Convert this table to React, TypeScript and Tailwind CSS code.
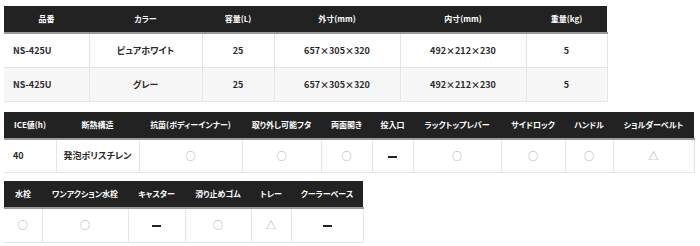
import type { ReactNode } from 'react';

type Cell = ReactNode;

const Circle = () => <span className="text-[#a6a6a6] font-normal text-[10px]">○</span>;
const Tri = () => <span className="text-[#a6a6a6] font-normal text-[10px]">△</span>;
const Dash = () => <span className="inline-block h-[2px] w-[9px] bg-[#222] align-middle" />;

function SpecTable({
  widths,
  head,
  rows,
  firstLeft = false,
}: {
  widths: number[];
  head: string[];
  rows: Cell[][];
  firstLeft?: boolean;
}) {
  const total = widths.reduce((a, b) => a + b, 0);
  return (
    <table className="table-fixed border-collapse" style={{ width: total }}>
      <colgroup>
        {widths.map((w, i) => (
          <col key={i} style={{ width: w }} />
        ))}
      </colgroup>
      <thead>
        <tr className="h-[27px] bg-[#222] text-white border-b-2 border-[#9a9a9a]">
          {head.map((h, i) => (
            <th key={i} className="text-[8px] font-bold whitespace-nowrap text-center">
              {h}
            </th>
          ))}
        </tr>
      </thead>
      <tbody>
        {rows.map((r, ri) => (
          <tr key={ri} className={`h-[34px] border-b border-[#e6e6e6] ${ri % 2 === 1 ? 'bg-[#f7f7f7]' : 'bg-white'}`}>
            {r.map((c, ci) => (
              <td
                key={ci}
                className={`text-[9px] font-bold text-[#2a2a2a] whitespace-nowrap border-r border-[#e6e6e6] ${firstLeft && ci === 0 ? 'text-left pl-[9px]' : 'text-center'}`}
              >
                {c}
              </td>
            ))}
          </tr>
        ))}
      </tbody>
    </table>
  );
}

export default function App() {
  return (
    <div className="bg-white w-[700px] h-[246px] pt-[6px] pl-[4px] leading-none font-['Noto_Sans_CJK_JP',sans-serif] [font-feature-settings:'palt']">
      <SpecTable
        firstLeft
        widths={[85, 113, 72, 126, 126, 81]}
        head={['品番', 'カラー', '容量(L)', '外寸(mm)', '内寸(mm)', '重量(kg)']}
        rows={[
          ['NS-425U', 'ピュアホワイト', '25', '657×305×320', '492×212×230', '5'],
          ['NS-425U', 'グレー', '25', '657×305×320', '492×212×230', '5'],
        ]}
      />
      <div className="h-[10px]" />
      <SpecTable
        firstLeft
        widths={[52, 83, 103, 79, 51, 41, 88, 64, 48, 81]}
        head={[
          'ICE値(h)',
          '断熱構造',
          '抗菌(ボディーインナー)',
          '取り外し可能フタ',
          '両面開き',
          '投入口',
          'ラックトップレバー',
          'サイドロック',
          'ハンドル',
          'ショルダーベルト',
        ]}
        rows={[
          ['40', '発泡ポリスチレン', <Circle />, <Circle />, <Circle />, <Dash />, <Circle />, <Circle />, <Circle />, <Tri />],
        ]}
      />
      <div className="h-[8px]" />
      <SpecTable
        widths={[38, 86, 57, 66, 40, 72]}
        head={['水栓', 'ワンアクション水栓', 'キャスター', '滑り止めゴム', 'トレー', 'クーラーベース']}
        rows={[[<Circle />, <Circle />, <Dash />, <Circle />, <Tri />, <Dash />]]}
      />
    </div>
  );
}
